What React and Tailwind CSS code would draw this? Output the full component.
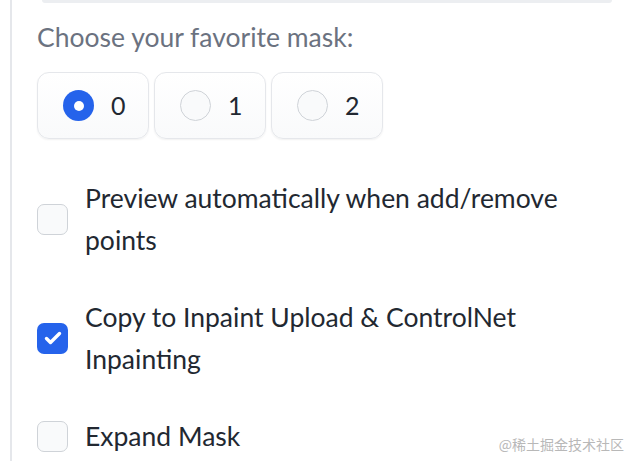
import React from "react";

const font = { fontFamily: '"Source Sans Pro", Lato, "Noto Sans CJK SC", sans-serif' };

function Radio({ label, checked }) {
  return (
    <label className="flex items-center gap-[17px] w-[112px] h-[67px] pl-[25px] rounded-[12px] border border-[#e5e7eb] bg-gradient-to-b from-white to-[#f9fafb] shadow-[0_1px_2px_rgba(0,0,0,0.06)]">
      {checked ? (
        <span className="w-[31px] h-[31px] rounded-full bg-[#2563eb] flex items-center justify-center">
          <span className="w-[10px] h-[10px] rounded-full bg-white" />
        </span>
      ) : (
        <span className="w-[31px] h-[31px] rounded-full border-[1.5px] border-[#cfd3d8] bg-[#f9fafb]" />
      )}
      <span className="text-[25px] text-[#222831] leading-none">{label}</span>
    </label>
  );
}

function Check({ checked, lines }) {
  return (
    <div className="flex items-center gap-[17px]">
      {checked ? (
        <span className="shrink-0 w-[31px] h-[31px] rounded-[7px] bg-[#2563eb] flex items-center justify-center">
          <svg width="20" height="20" viewBox="0 0 20 20" fill="none">
            <path d="M3.5 10.5l4 4 9-9" stroke="white" strokeWidth="3.4" strokeLinecap="round" strokeLinejoin="round" />
          </svg>
        </span>
      ) : (
        <span className="shrink-0 w-[31px] h-[31px] rounded-[7px] border-[1.5px] border-[#cfd3d8] bg-[#f9fafb]" />
      )}
      <div className="text-[26.5px] leading-[42px] text-[#222831]">
        {lines.map((l, i) => (
          <div key={i}>{l}</div>
        ))}
      </div>
    </div>
  );
}

export default function App() {
  return (
    <div className="relative w-[629px] h-[461px] bg-white overflow-hidden" style={font}>
      <div className="ml-[10px] h-full border-l-2 border-[#e5e7eb] pl-[25px] pr-[17px]">
        <div className="ml-[5px] h-[3px] bg-[#eceef1] rounded-b-[6px]" />
        <div className="mt-[19px] text-[26.5px] leading-[30px] text-[#6b7280]">Choose your favorite mask:</div>
        <div className="mt-[20px] flex gap-[5px]">
          <Radio label="0" checked />
          <Radio label="1" />
          <Radio label="2" />
        </div>
        <div className="mt-[38px] flex flex-col gap-[35px]">
          <Check lines={["Preview automatically when add/remove", "points"]} />
          <Check checked lines={["Copy to Inpaint Upload & ControlNet", "Inpainting"]} />
          <Check lines={["Expand Mask"]} />
        </div>
      </div>
      <div className="absolute right-[5px] bottom-[6px] text-[14px] text-[#b8b8b8]" style={{ fontFamily: '"Noto Sans CJK SC", sans-serif' }}>
        @稀土掘金技术社区
      </div>
    </div>
  );
}
